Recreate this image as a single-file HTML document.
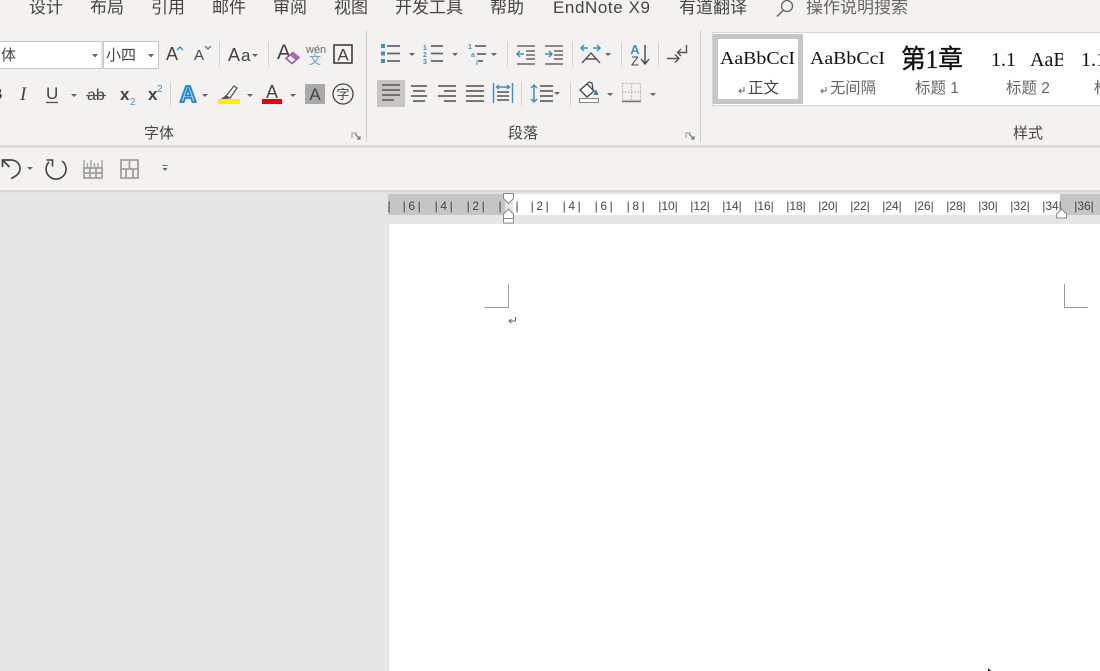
<!DOCTYPE html>
<html><head><meta charset="utf-8">
<style>
html,body{margin:0;padding:0;background:#e6e6e6;width:1100px;height:671px;overflow:hidden}
svg{display:block;position:absolute;left:0;top:0}
text{font-family:"Liberation Sans","Noto Sans CJK SC",sans-serif;fill:#444}
.m{font-size:17px;fill:#444}
.s{font-family:"Liberation Serif","Noto Serif CJK SC",serif;fill:#111}
.g{font-size:15px;fill:#444;text-anchor:middle}
.r{font-size:12px;fill:#444;text-anchor:middle}
.d{letter-spacing:2.6px}
.l{stroke:#666;stroke-width:1.7;fill:none}
.sep{stroke:#d4d3d2;stroke-width:1}
</style></head><body>
<svg width="1100" height="671" viewBox="0 0 1100 671" xmlns="http://www.w3.org/2000/svg">
<defs><clipPath id="c1"><rect x="1025" y="40" width="38" height="40"/></clipPath></defs>
<rect width="1100" height="671" fill="#e6e6e6"/>
<rect width="1100" height="146" fill="#f3f2f1"/>
<rect y="145" width="1100" height="3" fill="#dcdbda"/>
<rect y="148" width="1100" height="42" fill="#f3f2f1"/>
<rect y="190" width="1100" height="2" fill="#dbdbdb"/>
<rect y="192" width="1100" height="2" fill="#e2e2e2"/>

<!-- menu -->
<text x="29" y="13" class="m">设计</text><text x="90" y="13" class="m">布局</text><text x="151" y="13" class="m">引用</text><text x="212" y="13" class="m">邮件</text><text x="273" y="13" class="m">审阅</text><text x="334" y="13" class="m">视图</text><text x="395" y="13" class="m">开发工具</text><text x="490" y="13" class="m">帮助</text><text x="553" y="13" class="m" textLength="97">EndNote X9</text><text x="679" y="13" class="m">有道翻译</text><text x="806" y="13" class="m" style="fill:#666">操作说明搜索</text>
<circle cx="787" cy="6" r="5.500" fill="none" stroke="#666" stroke-width="1.300"/><path d="M783 10.500L777 16.500" stroke="#666" stroke-width="1.500"/>

<!-- font boxes -->
<rect x="-2" y="41.500" width="104" height="27" fill="#fff" stroke="#c6c6c6"/>
<rect x="103.500" y="41.500" width="55" height="27" fill="#fff" stroke="#c6c6c6"/>
<text x="1" y="60" font-size="15">体</text>
<text x="106" y="60" font-size="15">小四</text>
<path d="M92 54h6l-3 3.500zM148 54h6l-3 3.500z" fill="#666"/>
<text x="166" y="60" font-size="18">A</text><path d="M177 50l3-3 3 3" fill="none" stroke="#3c8fc6" stroke-width="1.500"/>
<text x="194" y="60" font-size="15">A</text><path d="M205 46l3 3 3-3" fill="none" stroke="#3c8fc6" stroke-width="1.500"/>
<line x1="219.500" y1="42" x2="219.500" y2="67" class="sep"/>
<text x="228" y="61" font-size="18">A</text><text x="241" y="61" font-size="17">a</text><path d="M252 54h6l-3 3z" fill="#666"/>
<line x1="268.500" y1="42" x2="268.500" y2="67" class="sep"/>
<text x="277" y="59" font-size="21">A</text>
<path d="M286 58.500l7-6 6 5-7 6z" fill="#fff" stroke="#a04fa8" stroke-width="1.500"/><path d="M290 55.500l3-3.500 6 5-3.500 3z" fill="#b067b6"/>
<text x="306" y="53" font-size="11" style="fill:#666">wén</text>
<text x="315" y="64" font-size="12" text-anchor="middle" style="fill:#5ba3d6">文</text>
<rect x="334" y="45" width="18" height="18" fill="none" stroke="#333" stroke-width="1.500"/>
<text x="343" y="60.500" font-size="17" text-anchor="middle">A</text>

<!-- row 2 -->
<text x="-9" y="99" font-size="16" font-weight="bold">B</text>
<text x="20" y="100" font-size="19" font-style="italic" style="font-family:'Liberation Serif',serif">I</text>
<text x="46" y="99" font-size="17">U</text><line x1="46" y1="102.500" x2="58" y2="102.500" stroke="#555" stroke-width="1.300"/>
<path d="M71 94h6l-3 3zM202 94h6l-3 3zM247 94h6l-3 3zM290 94h6l-3 3z" fill="#666"/>
<text x="87" y="100" font-size="16">ab</text><line x1="86" y1="95.500" x2="106" y2="95.500" stroke="#555" stroke-width="1.200"/>
<text x="120" y="100" font-size="17" font-weight="bold">x</text><text x="130" y="105" font-size="10" style="fill:#3c8fc6">2</text>
<text x="148" y="100" font-size="17" font-weight="bold">x</text><text x="157" y="92" font-size="10" style="fill:#3c8fc6">2</text>
<line x1="170.500" y1="82" x2="170.500" y2="106" class="sep"/>
<text x="188" y="102" font-size="23" font-weight="bold" text-anchor="middle" style="fill:#a9d3ef;stroke:#1f86cc;stroke-width:1.800">A</text>
<path d="M226 96l8-10 3 2-7 10z" fill="#fff" stroke="#555" stroke-width="1.300"/><path d="M221 99l5-4 3 3-1 1z" fill="#555"/>
<rect x="218" y="99" width="22" height="5" fill="#f9f000"/>
<text x="272" y="98" font-size="18" text-anchor="middle">A</text><rect x="262" y="99" width="20" height="5" fill="#e60012"/>
<rect x="305" y="84" width="20" height="20" fill="#a9a9a9"/><text x="315" y="100" font-size="17" text-anchor="middle">A</text>
<circle cx="343" cy="94" r="10" fill="none" stroke="#444" stroke-width="1.300"/><text x="343" y="99" font-size="13" text-anchor="middle">字</text>
<text x="159" y="138" class="g">字体</text>
<path d="M352 138v-5h5" fill="none" stroke="#999"/><path d="M355 134l5 5m0-3v3h-3" fill="none" stroke="#666"/>
<line x1="366.500" y1="30" x2="366.500" y2="142" stroke="#cfcecd"/>

<!-- paragraph row 1 -->
<g fill="#3c8fc6"><rect x="381" y="44" width="4" height="4"/><rect x="381" y="51.500" width="4" height="4"/><rect x="381" y="59" width="4" height="4"/></g>
<path d="M387 46h13M387 53.500h13M387 61h13M431 46h12M431 53.500h12M431 61h12M475 46h11M477 54h9M478 61h5" stroke="#666" stroke-width="1.700" fill="none"/>
<text x="423" y="50" font-size="7" style="fill:#3c8fc6;font-weight:bold">1</text><text x="423" y="57" font-size="7" style="fill:#3c8fc6;font-weight:bold">2</text><text x="423" y="64" font-size="7" style="fill:#3c8fc6;font-weight:bold">3</text>
<text x="468" y="49" font-size="7" style="fill:#3c8fc6;font-weight:bold">1</text><text x="471" y="57" font-size="7" style="fill:#3c8fc6;font-weight:bold">a</text><text x="476" y="65" font-size="7" style="fill:#3c8fc6;font-weight:bold">i</text>
<path d="M409 53h6l-3 3zM452 53h6l-3 3zM491 53h6l-3 3zM605 53h6l-3 3z" fill="#666"/>
<line x1="507.500" y1="42" x2="507.500" y2="67" class="sep"/>
<path d="M517 46h18M526 51h9M526 55h9M526 59h9M517 64h18M545 46h18M554 51h9M554 55h9M554 59h9M545 64h18" stroke="#666" stroke-width="1.400" fill="none"/>
<path d="M517 54h7M520 51l-3 3 3 3M545 54h7M549 51l3 3-3 3" stroke="#3c8fc6" stroke-width="1.500" fill="none"/>
<line x1="572.500" y1="42" x2="572.500" y2="67" class="sep"/>
<path d="M581 48h7M584 45l-3 3 3 3M593 48h7M597 45l3 3-3 3" stroke="#3c8fc6" stroke-width="1.500" fill="none"/>
<path d="M582 63l9-10 9 10M585 59h12" stroke="#555" stroke-width="1.400" fill="none"/>
<line x1="621.500" y1="42" x2="621.500" y2="67" class="sep"/>
<text x="635" y="54" font-size="13" font-weight="bold" text-anchor="middle" style="fill:#3c8fc6">A</text>
<text x="635" y="65.500" font-size="13" text-anchor="middle" style="fill:#444">Z</text>
<path d="M645 45v18M641 59l4 5 4-5" stroke="#444" stroke-width="1.400" fill="none"/>
<line x1="658.500" y1="42" x2="658.500" y2="67" class="sep"/>
<path d="M667 58.500h12M675 54.500l4 4-4 4M686.500 45v7.500h-9M681 49l-3.500 3.500 3.500 3.500" stroke="#555" stroke-width="1.400" fill="none"/>

<!-- paragraph row 2 -->
<rect x="377" y="80" width="28" height="27" fill="#c8c6c4"/>
<path d="M382 85h18M382 90h18M382 95h18M382 100h12M411 86h16M413 91h12M411 96h16M413 101h12M438 86h18M444 91h12M438 96h18M444 101h12M466 86h18M466 91h18M466 96h18M466 101h18" class="l"/>
<path d="M493.500 83v20M512.500 83v20M497 87h12M499 85l-2.500 2 2.500 2M507 85l2.500 2-2.500 2" stroke="#3c8fc6" stroke-width="1.400" fill="none"/>
<path d="M497 92h12M497 96h12M497 100h12" stroke="#555" stroke-width="1.500" fill="none"/>
<line x1="521.500" y1="82" x2="521.500" y2="106" class="sep"/>
<path d="M534 85v17M531 88l3-3 3 3M531 99l3 3 3-3" stroke="#3c8fc6" stroke-width="1.500" fill="none"/>
<path d="M540 86h13M540 91h13M540 96h13M540 101h13" class="l"/>
<path d="M554 92h6l-3 3z" fill="#666"/>
<line x1="570.500" y1="82" x2="570.500" y2="106" class="sep"/>
<path d="M580 90l7-6 7 7-7 6z" fill="#fff" stroke="#444" stroke-width="1.300"/><path d="M587 84l2-2 3 1 1 7" fill="none" stroke="#444" stroke-width="1.200"/><path d="M596 89l2.500 6h-5z" fill="#3c7ea8"/>
<rect x="579.500" y="98.500" width="19" height="4" fill="#fff" stroke="#888"/>
<path d="M607 93h6l-3 3zM650 93h6l-3 3z" fill="#666"/>
<g stroke="#c2c2c2" fill="none" stroke-width="1.200"><rect x="622.500" y="83.500" width="18" height="17" stroke-dasharray="2 1"/><path d="M631.500 83v18M622 92h19" stroke-dasharray="2 1"/></g>
<path d="M622 101.500h19" stroke="#777" stroke-width="1.500"/>
<text x="523" y="138" class="g">段落</text>
<path d="M686 138v-5h5" fill="none" stroke="#999"/><path d="M689 134l5 5m0-3v3h-3" fill="none" stroke="#666"/>
<line x1="700.500" y1="30" x2="700.500" y2="142" stroke="#cfcecd"/>

<!-- styles -->
<rect x="712.500" y="32.500" width="400" height="73" fill="#fff" stroke="#d6d5d4"/>
<rect x="715.500" y="36.500" width="85" height="65" fill="#fff" stroke="#c6c6c6" stroke-width="5"/>
<text x="720" y="64" class="s" font-size="18" textLength="75" lengthAdjust="spacingAndGlyphs">AaBbCcI</text>
<text x="810" y="64" class="s" font-size="18" textLength="75" lengthAdjust="spacingAndGlyphs">AaBbCcI</text>
<text x="901" y="68" class="s" font-size="26" textLength="62" lengthAdjust="spacingAndGlyphs" style="font-family:'Liberation Serif','Noto Sans CJK SC',serif;stroke:#111;stroke-width:.35">第1章</text>
<text x="991" y="66" class="s" font-size="20">1.1</text>
<g clip-path="url(#c1)"><text x="1030" y="66" class="s" font-size="20">AaBb</text></g>
<text x="1081" y="66" class="s" font-size="20">1.1</text>
<path d="M744 87v4h-5M741 89l-2 2 2 2M826 87v4h-5M823 89l-2 2 2 2" stroke="#666" fill="none"/>
<text x="748" y="93" font-size="15.500">正文</text>
<text x="830" y="93" font-size="15.300" style="fill:#666">无间隔</text>
<text x="915" y="93" font-size="15.500" style="fill:#666">标题 1</text>
<text x="1006" y="93" font-size="15.500" style="fill:#666">标题 2</text>
<text x="1094" y="93" font-size="15.500" style="fill:#666">标</text>
<text x="1028" y="138" class="g">样式</text>

<!-- QAT -->
<path d="M2.500 167v-7h8c6 0 9.500 4 9.500 8.500 0 4-3 7.500-9 10M2.500 160l7 7" fill="none" stroke="#444" stroke-width="1.700"/>
<path d="M27 167h6l-3 3z" fill="#666"/>
<path d="M62 161a10 10 0 1 1-13 1M46.500 160h6v6.500" fill="none" stroke="#444" stroke-width="1.600"/>
<path d="M84 168h18v10h-18zM84 173h18M90 168v10M96 168v10" fill="none" stroke="#a0a0a0" stroke-width="1.800"/>
<path d="M84 160v8M87.500 163v5M91 160v8M94.500 163v5M98 163v5M102 160v8" fill="none" stroke="#a0a0a0" stroke-width="1.300"/>
<path d="M121 160h17v18h-17zM121 169h17M129.500 160v9M126 169v9M133 169v9" fill="none" stroke="#a0a0a0" stroke-width="1.800"/>
<path d="M162.500 165.500h5" stroke="#666" stroke-width="1"/><path d="M162.500 168h5l-2.500 3z" fill="#666"/>

<!-- ruler -->
<rect x="388" y="194" width="712" height="30" fill="#e6e6e6"/>
<rect x="388" y="194" width="117" height="21" fill="#c6c6c6"/>
<rect x="513" y="194" width="547" height="21" fill="#fff"/>
<rect x="1060" y="194" width="40" height="21" fill="#c6c6c6"/>
<rect x="389.500" y="224" width="711" height="447" fill="#fff"/>
<text x="389" y="210" class="r">|</text><text x="413" y="210" class="r d">|6|</text><text x="445" y="210" class="r d">|4|</text><text x="477" y="210" class="r d">|2|</text><text x="500" y="210" class="r">|</text><text x="517" y="210" class="r">|</text><text x="541" y="210" class="r d">|2|</text><text x="573" y="210" class="r d">|4|</text><text x="605" y="210" class="r d">|6|</text><text x="637" y="210" class="r d">|8|</text>
<text x="668" y="210" class="r">|10|</text><text x="700" y="210" class="r">|12|</text><text x="732" y="210" class="r">|14|</text><text x="764" y="210" class="r">|16|</text><text x="796" y="210" class="r">|18|</text><text x="828" y="210" class="r">|20|</text><text x="860" y="210" class="r">|22|</text><text x="892" y="210" class="r">|24|</text><text x="924" y="210" class="r">|26|</text><text x="956" y="210" class="r">|28|</text><text x="988" y="210" class="r">|30|</text><text x="1020" y="210" class="r">|32|</text><text x="1052" y="210" class="r">|34|</text><text x="1084" y="210" class="r">|36|</text>
<path d="M503.500 193.500h10v5l-5 5-5-5z" fill="#fff" stroke="#8a8a8a"/>
<path d="M508.500 209l5 5v4.500h-10v-4.500z" fill="#fff" stroke="#8a8a8a"/>
<rect x="503.500" y="218.500" width="10" height="4.500" fill="#fff" stroke="#8a8a8a"/>
<path d="M1061.500 209l5 5v4h-10v-4z" fill="#fff" stroke="#8a8a8a"/>

<!-- page -->
<path d="M508.500 284v23.500h-24M1064.500 284v23.500h23" fill="none" stroke="#999" stroke-width="1"/>
<path d="M515.500 317v4h-6M511.500 319l-2.500 2 2.500 2" fill="none" stroke="#666"/>
<path d="M988 668l3.500 3h-3.500z" fill="#333"/>
</svg>
</body></html>
